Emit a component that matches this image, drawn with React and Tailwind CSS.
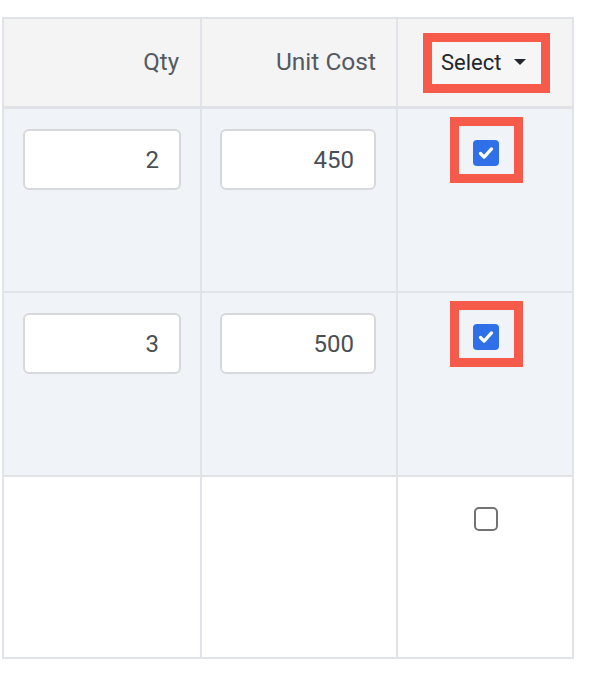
import React from "react";

const rows = [
  { qty: "2", cost: "450", checked: true, h: "h-[184px]" },
  { qty: "3", cost: "500", checked: true, h: "h-[184px]" },
  { qty: null, cost: null, checked: false, h: "h-[182px]" },
];

function CheckBox({ checked }) {
  if (!checked) {
    return <div className="w-[24px] h-[24px] rounded-[5px] border-2 border-[#737373] bg-white" />;
  }
  return (
    <div className="w-[26px] h-[26px] rounded-[4px] bg-[#2f6fe8] flex items-center justify-center">
      <svg width="20" height="20" viewBox="0 0 16 16" fill="none">
        <path d="M3.6 8.4l2.9 2.9 5.9-6.6" stroke="white" strokeWidth="2.6" strokeLinecap="round" strokeLinejoin="round" />
      </svg>
    </div>
  );
}

function Highlight({ children, className }) {
  return (
    <div className={`border-[9px] border-[#f55a4b] ${className}`}>{children}</div>
  );
}

function NumInput({ value }) {
  return (
    <div className="h-[61px] rounded-[6px] border-2 border-[#d6d9dc] bg-white flex items-center justify-end pr-[20px] text-[24px] text-[#4a4f55]">
      {value}
    </div>
  );
}

export default function App() {
  return (
    <div
      className="w-[600px] h-[678px] bg-white overflow-hidden pt-[17px] pl-[2px]"
      style={{ fontFamily: "Roboto, 'Liberation Sans', sans-serif" }}
    >
      <div className="w-[572px] border-t-2 border-l-2 border-[#e0e3e7]">
        {/* Header */}
        <div className="grid grid-cols-[198px_196px_176px] h-[90px] bg-[#f4f4f5] border-b-[3px] border-[#dfe2e6]">
          <div className="border-r-2 border-[#e0e3e7] flex items-center justify-end pr-[21px] text-[24px] text-[#555a60] pb-[1px]">
            Qty
          </div>
          <div className="border-r-2 border-[#e0e3e7] flex items-center justify-end pr-[20px] text-[24.5px] text-[#555a60] pb-[1px]">
            Unit Cost
          </div>
          <div className="border-r-2 border-[#e0e3e7] flex items-start pt-[14px] pl-[25px]">
            <Highlight className="w-[127px] h-[60px] bg-[#f6f6f7] flex items-center pl-[9px] gap-[13px] pb-[2px]">
              <span className="text-[22px] text-[#23272b]">Select</span>
              <svg width="12" height="6" viewBox="0 0 12 6">
                <path d="M0 0h12L6 6z" fill="#23272b" />
              </svg>
            </Highlight>
          </div>
        </div>

        {/* Body */}
        {rows.map((row, i) => (
          <div
            key={i}
            className={`grid grid-cols-[198px_196px_176px] ${row.h} border-b-2 border-[#e0e3e7] ${
              row.checked ? "bg-[#f0f4f9]" : "bg-white"
            }`}
          >
            <div className="border-r-2 border-[#e0e3e7] pt-[20px] pl-[19px] pr-[19px]">
              {row.qty && <NumInput value={row.qty} />}
            </div>
            <div className="border-r-2 border-[#e0e3e7] pt-[20px] pl-[18px] pr-[20px]">
              {row.cost && <NumInput value={row.cost} />}
            </div>
            <div className="border-r-2 border-[#e0e3e7] flex justify-center">
              {row.checked ? (
                <div className="pt-[8px] pl-[2px]">
                  <Highlight className="w-[73px] h-[66px] flex justify-center pt-[14px]">
                    <CheckBox checked />
                  </Highlight>
                </div>
              ) : (
                <div className="pt-[30px] pl-[2px]">
                  <CheckBox checked={false} />
                </div>
              )}
            </div>
          </div>
        ))}
      </div>
    </div>
  );
}
